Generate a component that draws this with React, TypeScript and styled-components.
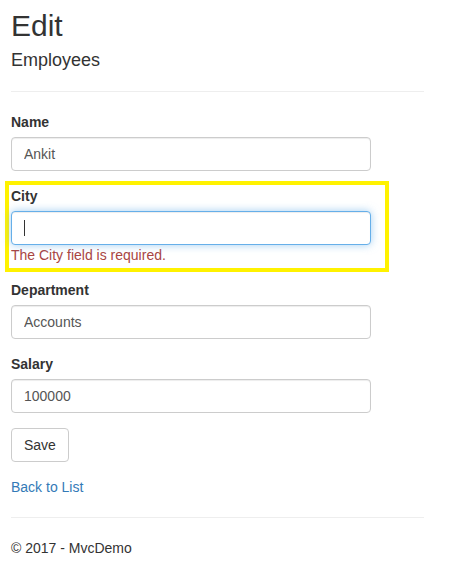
import styled, { createGlobalStyle } from "styled-components";

const GlobalStyle = createGlobalStyle`
  html, body {
    margin: 0;
    padding: 0;
    background: #fff;
  }
  body {
    font-family: "Liberation Sans", Arial, sans-serif;
    font-size: 14px;
    line-height: 20px;
    color: #333;
  }
`;

export default function App() {
  return (
    <>
      <GlobalStyle />
      <Page>
        <Title>Edit</Title>
        <SubTitle>Employees</SubTitle>
        <Rule />
        <form onSubmit={(e) => e.preventDefault()}>
          <FormGroup>
            <Label>Name</Label>
            <TextInput defaultValue="Ankit" />
          </FormGroup>
          <Highlight>
            <FormGroup $last>
              <Label>City</Label>
              <FieldWrap>
                <TextInput $focused defaultValue="" />
                <Caret />
              </FieldWrap>
              <ErrorText>The City field is required.</ErrorText>
            </FormGroup>
          </Highlight>
          <FormGroup>
            <Label>Department</Label>
            <TextInput defaultValue="Accounts" />
          </FormGroup>
          <FormGroup>
            <Label>Salary</Label>
            <TextInput defaultValue="100000" />
          </FormGroup>
          <FormGroup>
            <SaveButton type="submit">Save</SaveButton>
          </FormGroup>
        </form>
        <div>
          <BackLink href="#">Back to List</BackLink>
        </div>
        <Rule />
        <Footer>© 2017 - MvcDemo</Footer>
      </Page>
    </>
  );
}

const Page = styled.div`
  width: 413px;
  margin-left: 11px;
  padding-top: 9px;
`;

const Title = styled.h2`
  margin: 0 0 9px;
  font-size: 30px;
  font-weight: 500;
  line-height: 33px;
  color: #333;
`;

const SubTitle = styled.h4`
  margin: 0 0 10px;
  font-size: 18px;
  font-weight: 500;
  line-height: 19.8px;
  color: #333;
`;

const Rule = styled.hr`
  margin: 20px 0;
  border: 0;
  border-top: 1px solid #eee;
`;

const FormGroup = styled.div<{ $last?: boolean }>`
  margin-bottom: ${(p) => (p.$last ? "0" : "15px")};
`;

const Highlight = styled.div`
  box-sizing: border-box;
  width: 384px;
  margin: -5px 0 8px -6px;
  border: 4px solid #fff200;
  padding: 1px 2px 3px;
`;

const Label = styled.label`
  display: inline-block;
  margin-bottom: 5px;
  font-weight: 700;
`;

const FieldWrap = styled.div`
  position: relative;
  width: 360px;
`;

const TextInput = styled.input<{ $focused?: boolean }>`
  display: block;
  box-sizing: border-box;
  width: 360px;
  height: 34px;
  padding: 6px 12px;
  font-family: inherit;
  font-size: 14px;
  line-height: 20px;
  color: #555;
  background: #fff;
  border: 1px solid ${(p) => (p.$focused ? "#66afe9" : "#ccc")};
  border-radius: 4px;
  outline: 0;
  box-shadow: ${(p) =>
    p.$focused
      ? "inset 0 1px 1px rgba(0,0,0,.075), 0 0 8px rgba(102,175,233,.6)"
      : "inset 0 1px 1px rgba(0,0,0,.075)"};
  caret-color: transparent;
`;

const Caret = styled.span`
  position: absolute;
  left: 13px;
  top: 9px;
  width: 1px;
  height: 16px;
  background: #333;
`;

const ErrorText = styled.span`
  color: #a94442;
`;

const SaveButton = styled.button`
  display: inline-block;
  height: 34px;
  padding: 6px 12px;
  font-family: inherit;
  font-size: 14px;
  line-height: 20px;
  color: #333;
  background: #fff;
  border: 1px solid #ccc;
  border-radius: 4px;
  cursor: pointer;
`;

const BackLink = styled.a`
  color: #337ab7;
  text-decoration: none;
`;

const Footer = styled.p`
  margin: 0 0 10px;
`;
